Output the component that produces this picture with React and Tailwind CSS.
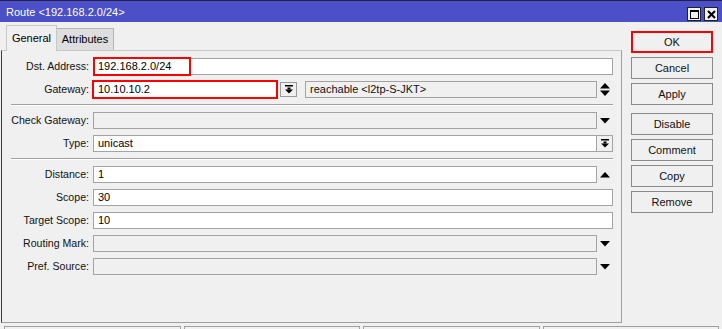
import React from 'react';

// small glyphs used in the winbox form
const DownTri = () => (
  <svg width="10" height="6" viewBox="0 0 10 6">
    <polygon points="0,0 10,0 5,5.5" fill="#000" />
  </svg>
);

const UpTri = () => (
  <svg width="10" height="6" viewBox="0 0 10 6">
    <polygon points="0,5.5 10,5.5 5,0" fill="#000" />
  </svg>
);

const UpDown = () => (
  <svg width="10" height="13" viewBox="0 0 10 13">
    <polygon points="0,5.5 10,5.5 5,0" fill="#000" />
    <polygon points="0,7.5 10,7.5 5,13" fill="#000" />
  </svg>
);

const BarDown = () => (
  <svg width="8" height="9" viewBox="0 0 8 9">
    <rect x="0" y="0" width="8" height="1.5" fill="#000" />
    <rect x="2.5" y="2.5" width="3" height="2" fill="#000" />
    <polygon points="0,4.5 8,4.5 4,8.5" fill="#000" />
  </svg>
);

function Row({ label, children }) {
  return (
    <div className="flex h-[17px] items-center">
      <div className="w-[91px] shrink-0 pr-[4px] text-right text-[10.6px] text-[#111]">{label}:</div>
      <div className="flex h-full flex-1 items-center">{children}</div>
    </div>
  );
}

function Field({ value, gray, className = '' }) {
  return (
    <div
      className={`flex h-[17px] flex-1 items-center border border-[#a3a3a3] px-[4px] ${
        gray ? 'bg-[#f0f0f0]' : 'bg-white'
      } ${className}`}
    >
      {value}
    </div>
  );
}

function ArrowCell({ children }) {
  return <div className="flex w-[16px] shrink-0 items-center justify-center">{children}</div>;
}

function Separator() {
  return <div className="ml-[9px] h-[2px] border-t border-b border-t-[#a0a0a0] border-b-white" />;
}

function SideButton({ label, red }) {
  return (
    <div
      className={`flex h-[22px] w-[82px] items-center justify-center bg-[#f0f0f0] text-[#111] ${
        red ? 'border-2 border-[#ff0000]' : 'border border-[#8a8a8a]'
      }`}
    >
      {label}
    </div>
  );
}

export default function App() {
  return (
    <div className="h-[329px] w-[722px] overflow-hidden bg-[#f0f0f0] font-['Liberation_Sans',Arial,sans-serif] text-[11px] text-black">
      {/* Title bar */}
      <div className="flex h-[22px] items-center border-t border-[#20204a] bg-[#4b50c8] pl-[6px] pr-[4px]">
        <span className="flex-1 pt-[2px] text-white">Route &lt;192.168.2.0/24&gt;</span>
        <div className="mt-[5px] flex gap-[3px]">
          <div className="flex h-[14px] w-[14px] items-center justify-center border border-[#222] bg-[#f0f0f0]">
            <div className="h-[9px] w-[9px] border border-t-2 border-black" />
          </div>
          <div className="flex h-[14px] w-[14px] items-center justify-center border border-[#222] bg-[#f0f0f0]">
            <svg width="9" height="9" viewBox="0 0 9 9">
              <path d="M1 1 L8 8 M8 1 L1 8" stroke="#000" strokeWidth="2" />
            </svg>
          </div>
        </div>
      </div>

      <div className="flex">
        {/* Left: tabs + panel */}
        <div className="flex w-[622px] flex-col">
          <div className="flex h-[28px] items-end pl-[6px]">
            <div className="relative z-10 -mb-px flex h-[26px] w-[51px] items-center justify-center border border-b-0 border-[#c8c8c8] bg-[#f0f0f0]">
              General
            </div>
            <div className="flex h-[22px] w-[57px] items-center justify-center border border-b-0 border-l-0 border-[#b4b4b4] bg-[#dedede]">
              Attributes
            </div>
          </div>

          <div className="ml-[1px] flex h-[273px] w-[621px] flex-col gap-[6px] border-t border-r border-b border-l border-t-[#c8c8c8] border-r-[#a0a0a0] border-b-[#a0a0a0] border-l-[#3c3c3c] pt-[7px] pr-[8px]">
            <Row label="Dst. Address">
              <div className="relative flex h-full flex-1">
                <Field value="192.168.2.0/24" />
                <div className="absolute -top-[1px] -bottom-[1px] left-0 w-[98px] border-2 border-[#ff0000]" />
              </div>
            </Row>

            <Row label="Gateway">
              <div className="relative flex h-full w-[184px] shrink-0">
                <Field value="10.10.10.2" />
                <div className="absolute -inset-[1px] border-2 border-[#ff0000]" />
              </div>
              <div className="ml-[3px] flex h-[15px] w-[17px] items-center justify-center border border-[#9a9a9a] bg-[#f0f0f0]">
                <BarDown />
              </div>
              <Field value="reachable <l2tp-S-JKT>" gray className="ml-[8px] text-[#111]" />
              <ArrowCell>
                <UpDown />
              </ArrowCell>
            </Row>

            <Separator />

            <Row label="Check Gateway">
              <Field value="" gray />
              <ArrowCell>
                <DownTri />
              </ArrowCell>
            </Row>

            <Row label="Type">
              <Field value="unicast" />
              <div className="flex h-[17px] w-[16px] items-center justify-center border border-l-0 border-[#a3a3a3] bg-[#f0f0f0]">
                <BarDown />
              </div>
            </Row>

            <Separator />

            <Row label="Distance">
              <Field value="1" />
              <ArrowCell>
                <UpTri />
              </ArrowCell>
            </Row>

            <Row label="Scope">
              <Field value="30" />
            </Row>

            <Row label="Target Scope">
              <Field value="10" />
            </Row>

            <Row label="Routing Mark">
              <Field value="" gray />
              <ArrowCell>
                <DownTri />
              </ArrowCell>
            </Row>

            <Row label="Pref. Source">
              <Field value="" gray />
              <ArrowCell>
                <DownTri />
              </ArrowCell>
            </Row>
          </div>
        </div>

        {/* Right: action buttons */}
        <div className="ml-[9px] flex flex-col pt-[9px]">
          <div className="flex flex-col gap-[4px]">
            <SideButton label="OK" red />
            <SideButton label="Cancel" />
            <SideButton label="Apply" />
          </div>
          <div className="mt-[8px] flex flex-col gap-[4px]">
            <SideButton label="Disable" />
            <SideButton label="Comment" />
            <SideButton label="Copy" />
            <SideButton label="Remove" />
          </div>
        </div>
      </div>

      {/* Status bar */}
      <div className="mt-[3px] flex h-[4px] gap-[3px] pl-[4px] pr-[3px]">
        {[0, 1, 2, 3].map((i) => (
          <div key={i} className="flex-1 border-t border-l border-r border-[#a0a0a0] bg-[#f0f0f0]" />
        ))}
      </div>
    </div>
  );
}
